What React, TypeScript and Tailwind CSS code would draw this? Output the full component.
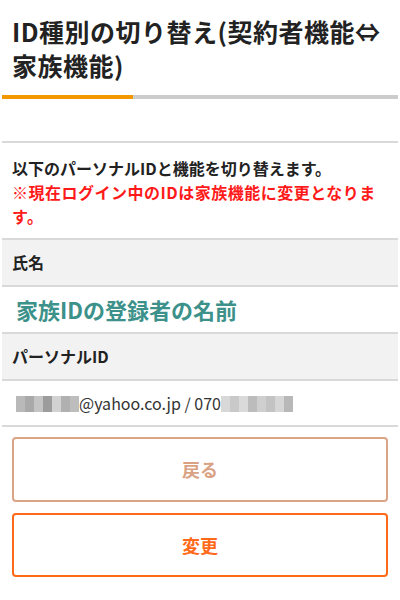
import React from 'react';

const Mosaic = ({ shades }: { shades: string[] }) => (
  <span className="inline-flex h-[16px] align-[-2px]">
    {shades.map((c, i) => (
      <span key={i} className="h-full w-[9px]" style={{ backgroundColor: c }} />
    ))}
  </span>
);

const App: React.FC = () => {
  return (
    <div className="min-h-[600px] bg-white px-[2px] text-[#222] font-['Noto_Sans_CJK_JP','Noto_Sans',sans-serif]">
      <h1 className="pl-[10px] pr-[2px] pt-[14px] text-[25px] font-bold leading-[34px] tracking-[0.5px] text-[#222]">
        ID種別の切り替え(契約者機能⇔<br />家族機能)
      </h1>

      <div className="mt-[13px] flex h-[4px]">
        <div className="w-[131px] bg-[#f39800]" />
        <div className="flex-1 bg-[#cccccc]" />
      </div>

      <div className="mt-[42px] border-t-2 border-[#d9d9d9] px-[10px] pb-[10px] pt-[13px] text-[16px] font-bold leading-[24px]">
        <p>以下のパーソナルIDと機能を切り替えます。</p>
        <p className="tracking-[0.5px] text-[#ff1a1a]">※現在ログイン中のIDは家族機能に変更となります。</p>
      </div>

      <div className="border-t-2 border-[#d9d9d9] bg-[#f2f2f2] px-[10px] text-[16px] font-bold leading-[45px]">
        氏名
      </div>
      <div className="border-t-2 border-[#d9d9d9] px-[14px] text-[22px] font-bold leading-[45px] text-[#3c918a]">
        家族IDの登録者の名前
      </div>
      <div className="border-t-2 border-[#d9d9d9] bg-[#f2f2f2] px-[10px] text-[16px] font-bold leading-[45px]">
        パーソナルID
      </div>
      <div className="border-y-2 border-[#d9d9d9] px-[14px] text-[16px] leading-[44px] text-[#333]">
        <Mosaic shades={['#b9b9b9', '#a9a9a9', '#c4c4c4', '#9c9c9c', '#d2d2d2', '#b0b0b0', '#bdbdbd']} />
        @yahoo.co.jp / 070
        <Mosaic shades={['#d8d8d8', '#c9c9c9', '#dadada', '#bcbcbc', '#cfcfcf', '#c3c3c3', '#d6d6d6', '#b8b8b8']} />
      </div>

      <div className="mx-[10px] mt-[10px] flex flex-col gap-[11px]">
        <button
          type="button"
          className="h-[65px] w-full rounded-[4px] border-2 border-[#dba486] bg-white text-[18px] font-bold text-[#d9a283]"
        >
          戻る
        </button>
        <button
          type="button"
          className="h-[64px] w-full rounded-[4px] border-2 border-[#ff6a1a] bg-white text-[18px] font-bold text-[#ff6a1a]"
        >
          変更
        </button>
      </div>
    </div>
  );
};

export default App;
